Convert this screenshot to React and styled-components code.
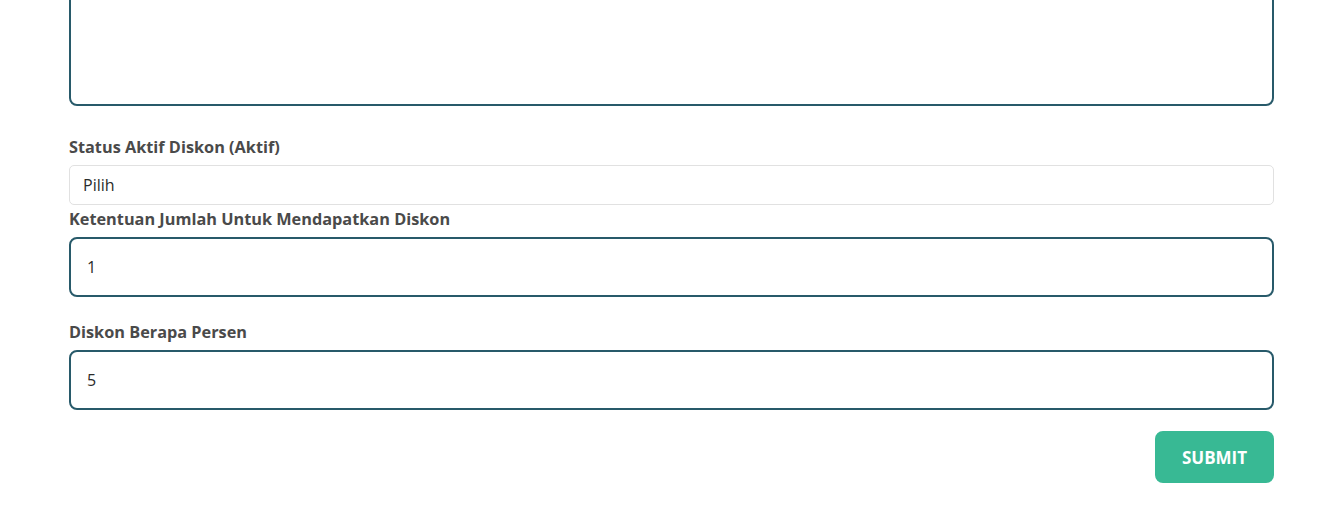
import React from "react";
import styled, { createGlobalStyle } from "styled-components";

const GlobalStyle = createGlobalStyle`
  body {
    margin: 0;
    background: #fff;
    font-family: "Open Sans", "Noto Sans", sans-serif;
    overflow: hidden;
  }
`;

const Form = styled.form`
  width: 1205px;
  margin: -30px 0 0 69px;
  display: flex;
  flex-direction: column;
`;

const Group = styled.div`
  display: flex;
  flex-direction: column;
  margin-bottom: ${(p) => p.$gap || 23}px;
`;

const Label = styled.label`
  font-size: 16.3px;
  font-weight: 700;
  line-height: 24px;
  color: #4a4a4a;
  margin-bottom: 6px;
`;

const TextArea = styled.textarea`
  box-sizing: border-box;
  height: 136px;
  border: 2px solid #285a6a;
  border-radius: 8px;
  resize: none;
  outline: none;
  margin-bottom: 6px;
`;

const Select = styled.select`
  box-sizing: border-box;
  height: 40px;
  padding: 0 13px;
  border: 1px solid #e1e1e1;
  border-radius: 5px;
  background: #fff;
  font-family: inherit;
  font-size: 16px;
  color: #2b2b2b;
  appearance: none;
  outline: none;
`;

const Input = styled.input`
  box-sizing: border-box;
  height: 60px;
  padding: 0 16px;
  border: 2px solid #285a6a;
  border-radius: 8px;
  font-family: inherit;
  font-size: 16px;
  color: #2b2b2b;
  outline: none;
`;

const Actions = styled.div`
  display: flex;
  justify-content: flex-end;
`;

const Button = styled.button`
  width: 119px;
  height: 52px;
  border: none;
  border-radius: 8px;
  background: #38b994;
  color: #fff;
  font-family: inherit;
  font-size: 17px;
  font-weight: 700;
  cursor: pointer;
`;

export default function App() {
  return (
    <>
      <GlobalStyle />
      <Form onSubmit={(e) => e.preventDefault()}>
        <Group $gap={23}>
          <TextArea />
        </Group>
        <Group $gap={2}>
          <Label>Status Aktif Diskon (Aktif)</Label>
          <Select defaultValue="">
            <option value="">Pilih</option>
            <option value="1">Aktif</option>
            <option value="0">Tidak Aktif</option>
          </Select>
        </Group>
        <Group>
          <Label>Ketentuan Jumlah Untuk Mendapatkan Diskon</Label>
          <Input defaultValue="1" />
        </Group>
        <Group $gap={21}>
          <Label>Diskon Berapa Persen</Label>
          <Input defaultValue="5" />
        </Group>
        <Actions>
          <Button type="submit">SUBMIT</Button>
        </Actions>
      </Form>
    </>
  );
}
